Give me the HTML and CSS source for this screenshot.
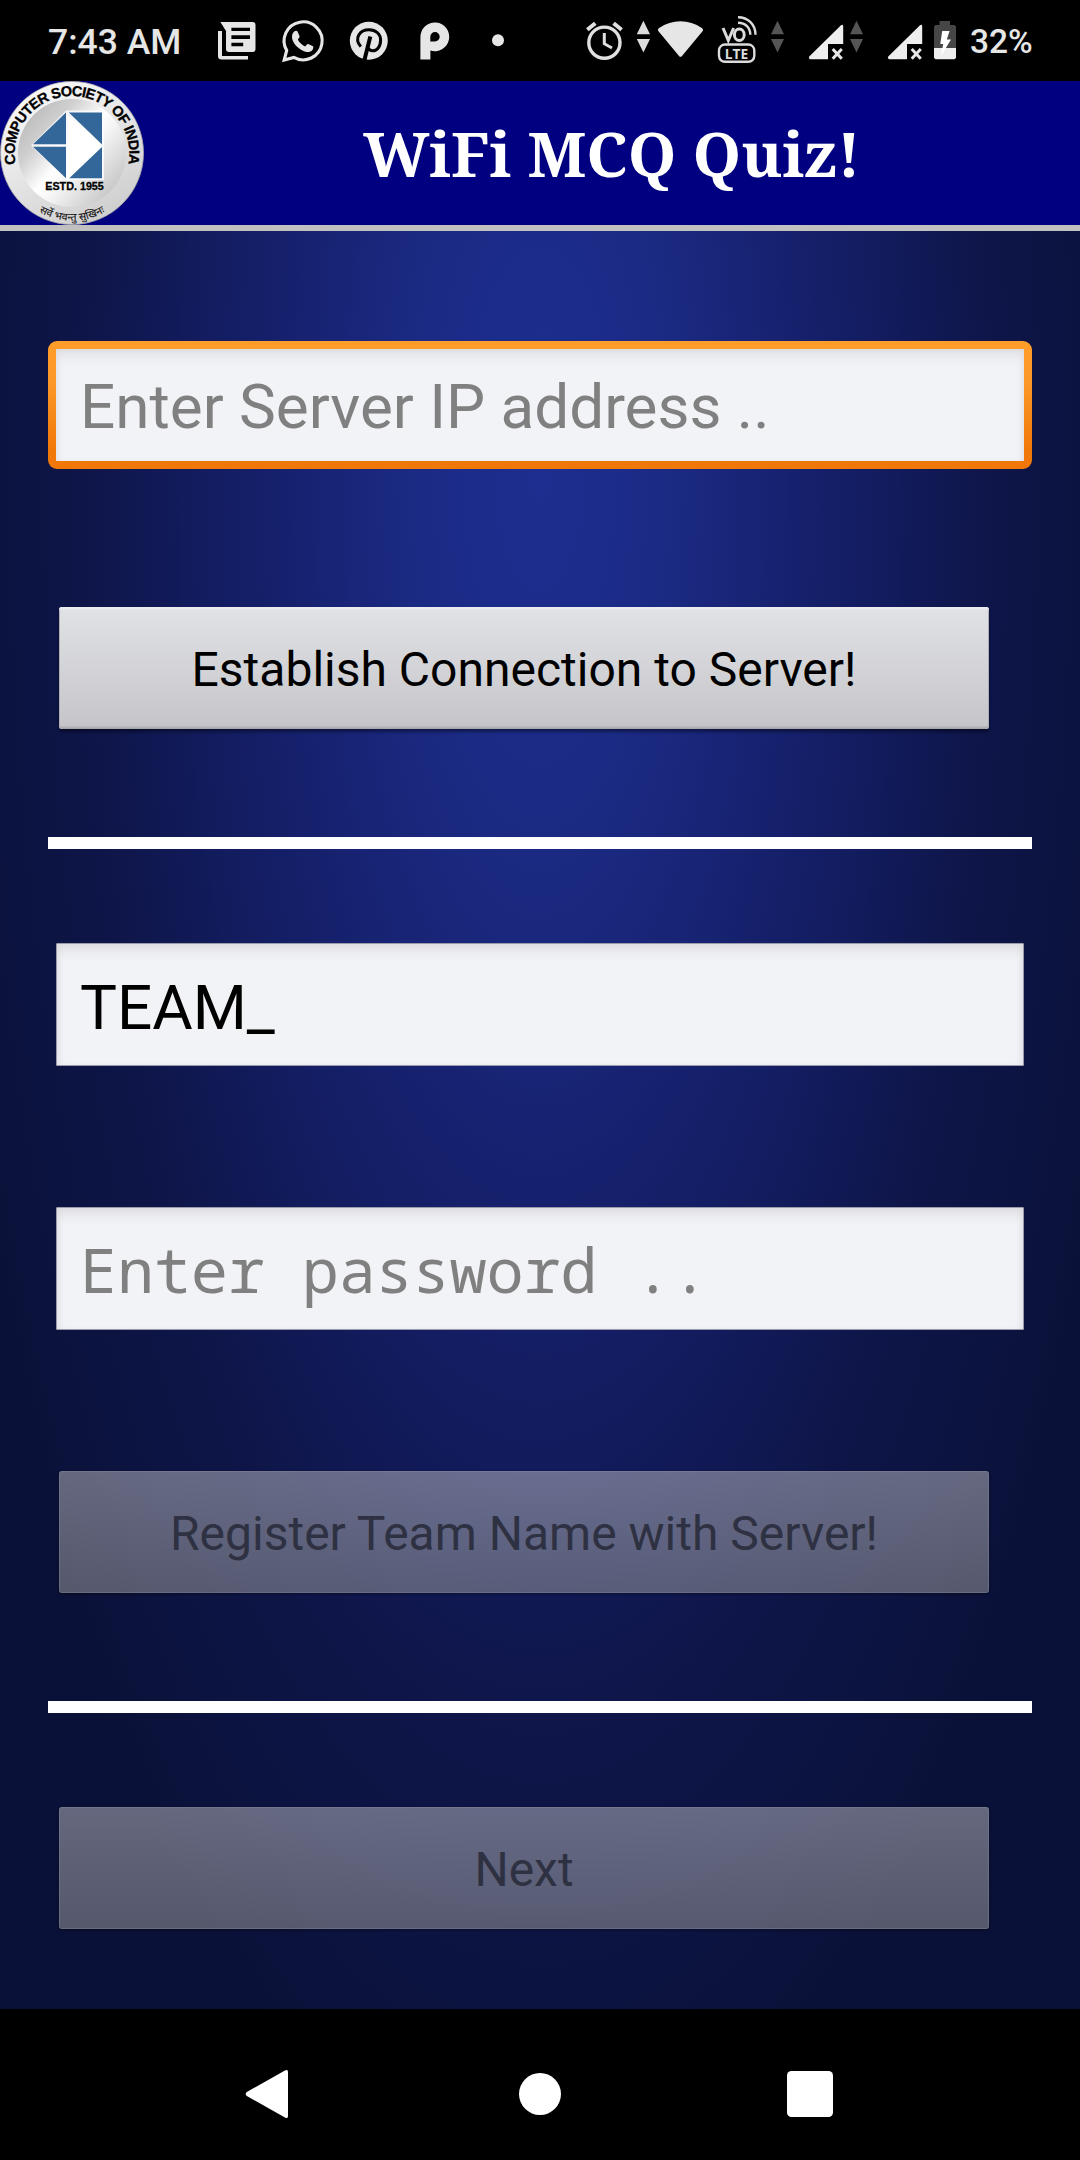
FILE: index.html
```html
<!DOCTYPE html>
<html lang="en">
<head>
<meta charset="utf-8">
<title>WiFi MCQ Quiz!</title>
<link rel="stylesheet" href="styles.css">
</head>
<body>
<div class="status">
  <span class="clock">7:43 AM</span>
  <div class="notes">
    <svg width="55" height="81" viewBox="210 0 55 81"><path fill="#e6e6e6" fill-rule="evenodd" d="M220.4 22H252.500a3 3 0 0 1 3 3V49a3 3 0 0 1-3 3H229a3 3 0 0 1-3-3V31ZM231.400 27.700V31H250V27.700ZM231.400 35.200V39H250V35.200ZM231.400 42.700V46.300H243.200V42.700Z"/><path fill="#e6e6e6" d="M218 31H222V56H248V59.500H221.500a3.500 3.500 0 0 1-3.500-3.500Z"/></svg>
    <svg width="70" height="81" viewBox="265 0 70 81"><path d="M284.200 60L286.700 50.400A19 19 0 1 1 293.800 57.400Z" fill="none" stroke="#e6e6e6" stroke-width="3.100"/><path fill="#e6e6e6" d="M294.500 31.300c.8-.8 2.600-.8 3 .2l2 4.600c.3.900-.2 1.700-1.700 3.500 1.500 3.100 4.200 5.500 7.400 6.800 1.300-1.400 2-2.700 3.100-2.400l4.700 2.300c.8.500.1 3.200-1 4.200-2.200 2-5.300 2-9.500-.1-5-2.400-8.800-7-10-10.500-1.200-3.800-.2-6.700 2-8.600Z"/></svg>
    <svg width="65" height="81" viewBox="335 0 65 81"><circle cx="368.800" cy="40.800" r="19" fill="#e6e6e6"/><path d="M360.800 46.600C353.500 38 360 29.700 369 29.700c7.200 0 11.600 4.700 11.600 10.300 0 7-3.800 10.800-7.800 10.800-2.300 0-4.100-1.300-4.300-3.100" fill="none" stroke="#000" stroke-width="3"/><path d="M370.300 36.500L364.200 61" stroke="#000" stroke-width="4"/></svg>
    <svg width="65" height="81" viewBox="400 0 65 81"><path fill="#e6e6e6" fill-rule="evenodd" d="M420.400 59.500V37a14.400 14.400 0 1 1 10 13.600V59.500ZM430.300 41.400H435a4.700 4.700 0 1 0-4.700-4.700Z"/></svg>
    <svg width="65" height="81" viewBox="465 0 65 81"><circle cx="498" cy="40.200" r="6" fill="#e6e6e6"/></svg>
  </div>
  <div class="system">
    <svg width="52" height="81" viewBox="580 0 52 81" fill="none" stroke="#e0e0e0"><circle cx="604.400" cy="42.700" r="15.600" stroke-width="3.400"/><path stroke-width="3" d="M604.300 33V43.700L612 48"/><path stroke-width="4" d="M587.300 29.700L595.300 23.200M621.600 29.700L613.600 23.200"/></svg>
    <svg width="23" height="81" viewBox="632 0 23 81" fill="#dcdcdc"><path d="M643.400 20.700L650 34.200H636.800ZM643.400 52.500L650 39H636.800Z"/></svg>
    <svg width="53" height="81" viewBox="655 0 53 81"><path fill="#e6e6e6" d="M658.700 31.500Q657 29.500 659.200 27.900C672 18.900 689 18.900 701.800 27.900Q704 29.500 702.300 31.500L682 56Q680.500 57.700 679 56Z"/></svg>
    <svg width="57" height="81" viewBox="708 0 57 81"><g fill="none" stroke="#dcdcdc"><path stroke-width="3" d="M723 28L728.300 40.500L733.600 28"/><ellipse cx="739.300" cy="34.700" rx="4.900" ry="5.800" stroke-width="3"/><path stroke-width="2.400" d="M738 17.300C748 17.300 755.500 24.500 755.500 34.800M738 22.800C745.500 22.800 750.300 27.500 750.300 34.800"/><rect x="719" y="44.500" width="35.300" height="17.300" rx="6" stroke-width="2.400"/></g><text x="724.700" y="58.500" class="lte" textLength="23.500" lengthAdjust="spacingAndGlyphs">LTE</text></svg>
    <svg width="35" height="81" viewBox="765 0 35 81" fill="#555"><path d="M777.500 20.700L784 34.200H771ZM777.500 52.500L784 39H771Z"/></svg>
    <svg width="50" height="81" viewBox="800 0 50 81"><path fill="#eee" d="M810 59.200Q808 58 809.500 56.300L841 25.200Q843 24 843.200 26.200V44H828V59.200Z"/><path d="M832.700 49L841.800 58.700M841.800 49L832.700 58.700" stroke="#e6e6e6" stroke-width="3"/></svg>
    <svg width="29" height="81" viewBox="850 0 29 81" fill="#555"><path d="M856.500 20.700L863 34.200H850ZM856.500 52.500L863 39H850Z"/></svg>
    <svg width="50" height="81" viewBox="879 0 50 81"><path fill="#eee" d="M889 59.200Q887 58 888.500 56.300L920 25.200Q922 24 922.200 26.200V44H907V59.200Z"/><path d="M911.700 49L920.800 58.700M920.800 49L911.700 58.700" stroke="#e6e6e6" stroke-width="3"/></svg>
    <svg width="41" height="81" viewBox="929 0 41 81"><path fill="#464646" d="M939.500 21H950V25H954.500L956 26.500V48H934V26.500L935.500 25H939.500Z"/><path fill="#eee" d="M934 48H956V57.700L954.500 59.200H935.500L934 57.700Z"/><path fill="#fff" d="M942.200 31H949.600L946.800 39.500H951L941 56L943.200 44H940.300Z"/></svg>
    <span class="battery-level">32%</span>
  </div>
</div>
<header class="header">
  <svg class="logo" width="144" height="144" viewBox="0 0 144 144">
    <defs>
      <linearGradient id="rim" x1="0" y1="0" x2=".6" y2="1"><stop offset="0" stop-color="#fff"/><stop offset=".5" stop-color="#e8e8e8"/><stop offset="1" stop-color="#d0d0d0"/></linearGradient>
      <linearGradient id="disc" x1=".1" y1=".15" x2=".9" y2=".85"><stop offset="0" stop-color="#bdbdbd"/><stop offset=".22" stop-color="#d0d0d0"/><stop offset=".48" stop-color="#fff"/><stop offset=".62" stop-color="#f4f4f4"/><stop offset="1" stop-color="#c6c6c6"/></linearGradient>
      <path id="top-arc" d="M15.700 83A57.300 57.300 0 1 1 128.300 83"/>
      <path id="bottom-arc" d="M31 125.500A66 66 0 0 0 113 125.500"/>
    </defs>
    <circle cx="72" cy="72" r="71.500" fill="url(#rim)" stroke="#aaa" stroke-width=".8"/>
    <circle cx="72" cy="72" r="54" fill="url(#disc)"/>
    <path fill="#fff" d="M31 64.400L66 29.500H104V99H67Z" opacity=".75"/>
    <path fill="#336699" d="M33 63.300L66 31.500V63.300ZM33 65.800H66V97.300ZM68.800 31.500H102V63.500ZM102 66V97.300H69.200Z"/>
    <path fill="#fff" d="M68.500 35L100.500 64.600L68.500 95.500Z"/>
    <text class="estd" x="45.300" y="108.500" textLength="58.500" lengthAdjust="spacingAndGlyphs">ESTD. 1955</text>
    <text class="arc"><textPath href="#top-arc" startOffset="0" textLength="201" lengthAdjust="spacing">COMPUTER SOCIETY OF INDIA</textPath></text>
    <text class="motto"><textPath href="#bottom-arc" startOffset="50%" text-anchor="middle">सर्वे भवन्तु सुखिनः</textPath></text>
  </svg>
  <h1 class="title">WiFi MCQ Quiz!</h1>
</header>
<main class="form">
  <input class="field focused" type="text" placeholder="Enter Server IP address ..">
  <button class="btn connect">Establish Connection to Server!</button>
  <div class="rule rule-connect"></div>
  <input class="field team" type="text" value="TEAM_">
  <input class="field password" type="password" placeholder="Enter password ..">
  <button class="btn register" disabled>Register Team Name with Server!</button>
  <div class="rule rule-register"></div>
  <button class="btn next" disabled>Next</button>
</main>
<nav class="nav">
  <svg width="44" height="50" viewBox="0 0 44 50"><path fill="#fff" d="M39.500 1.800Q43 -.5 43 3V47Q43 50.500 39.500 48.200L1.800 27Q-.5 25 1.800 23Z"/></svg>
  <svg class="home" width="42" height="42" viewBox="0 0 42 42"><circle cx="21" cy="21" r="21" fill="#fff"/></svg>
  <svg width="46" height="46" viewBox="0 0 46 46"><rect width="46" height="46" rx="4.500" fill="#fff"/></svg>
</nav>
</body>
</html>
```
FILE: styles.css
```css
* { box-sizing: border-box; }
body {
  margin: 0;
  width: 1080px;
  height: 2160px;
  display: flex;
  flex-direction: column;
  background: #000;
  font-family: Roboto, sans-serif;
  overflow: hidden;
}
svg { display: block; flex: none; }

.status {
  height: 81px;
  display: flex;
  align-items: center;
  padding-left: 48px;
  color: #e6e6e6;
  font-size: 35.5px;
  font-weight: 500;
}
.clock { width: 162px; padding-top: 3px; white-space: nowrap; }
.notes { display: flex; width: 370px; }
.system { display: flex; align-items: center; }
.battery-level { padding-top: 1px; font-size: 33.500px; }
.lte { font: 700 15px "Open Sans", sans-serif; fill: #dcdcdc; }

.header {
  height: 150px;
  display: flex;
  background: #000080;
  border-bottom: 6px solid #c0c0c0;
}
.title {
  flex: 1;
  margin: 0;
  padding-top: 1px;
  text-align: center;
  color: #fff;
  font: 700 61.900px/143px "Noto Serif", "Droid Serif", "DejaVu Serif Condensed", "DejaVu Serif", serif;
}
.estd { font: 700 11.800px "Liberation Sans", sans-serif; fill: #000; stroke: #000; stroke-width: .3px; }
.arc { font: 700 14.500px "Liberation Sans", sans-serif; fill: #000; stroke: #000; stroke-width: .3px; }
.motto { font: 500 10.500px "Noto Sans Devanagari", "Noto Sans", sans-serif; fill: #222; }

.form {
  height: 1778px;
  display: flex;
  flex-direction: column;
  align-items: center;
  padding: 110px 48px 0;
  background: radial-gradient(ellipse 620px 1750px at 50% 13%, #1d2e90 0%, #1b2a84 20%, #151f68 47%, #0e164a 72%, #0a1138 100%);
}
.field {
  width: 968px;
  height: 123px;
  padding: 5px 24px 0 23px;
  border: 1px solid #9a9cac;
  border-radius: 1px;
  outline: 0;
  background: #f2f3f7;
  box-shadow: inset 0 12px 14px -8px #d8d8dc, inset 5px 0 6px -3px #e2e2e6, inset -5px 0 6px -3px #e2e2e6;
  color: #000;
  font: 400 62px Roboto, sans-serif;
}
.field::placeholder { color: #808080; opacity: 1; }
.focused {
  width: 984px;
  height: 128px;
  flex: none;
  padding: 2px 24px 0;
  border: 8px solid transparent;
  border-radius: 9px;
  background: linear-gradient(#f2f3f7, #f2f3f7) padding-box, linear-gradient(#ff9d2a, #fb9726 35%, #f07808 85%) border-box;
}
.btn {
  width: 930px;
  height: 122px;
  margin-right: 32px;
  flex: none;
  padding: 2px 0 0;
  border: 0;
  border-radius: 3px;
  background: linear-gradient(#e1e2e6, #c5c5c9);
  box-shadow: inset 0 3px 2px -1px #f0f0f2, inset 0 -3px 2px -1px #a8a8ac, inset 0 0 0 1px #a9aab4, 0 3px 3px rgba(0, 0, 0, .4);
  color: #000;
  font: 400 48px Roboto, sans-serif;
}
.btn:disabled {
  background: linear-gradient(rgba(190, 190, 195, .5), rgba(160, 160, 160, .5));
  box-shadow: inset 0 0 0 1px rgba(150, 150, 165, .3), 0 1px 3px rgba(0, 0, 0, .4);
  color: #2e3142;
}
.rule { width: 984px; height: 12px; flex: none; background: #fff; }
.connect { margin-top: 138px; }
.rule-connect { margin-top: 108px; }
.team { margin-top: 94px; flex: none; }
.password {
  margin-top: 141px;
  padding-top: 1px;
  flex: none;
  font-family: "Droid Sans Mono", "Noto Sans Mono", "DejaVu Sans Mono", monospace;
  letter-spacing: -.25px;
}
.register { margin-top: 141px; }
.rule-register { margin-top: 108px; }
.next { margin-top: 94px; }

.nav {
  height: 151px;
  display: flex;
  align-items: center;
  justify-content: space-between;
  padding: 19px 247px 0 245px;
}
.home { margin-left: 4px; }
```
